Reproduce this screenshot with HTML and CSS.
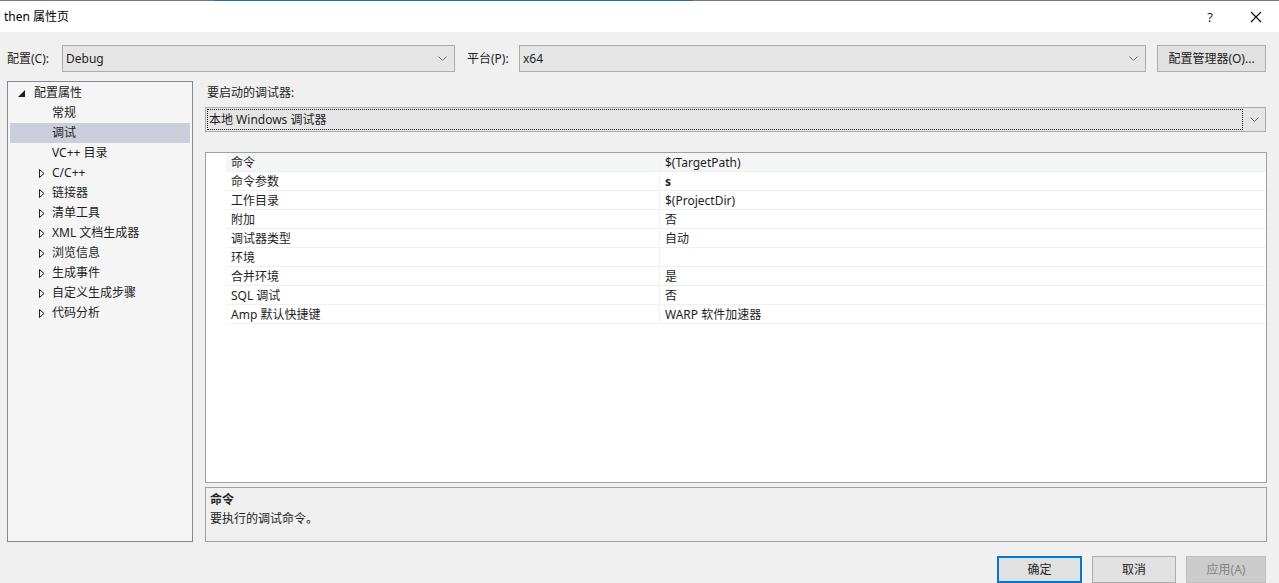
FILE: index.html
```html
<!DOCTYPE html>
<html lang="zh">
<head>
<meta charset="utf-8">
<title>then 属性页</title>
<link rel="stylesheet" href="styles.css">
</head>
<body>
<div class="accent"><span class="seg-a"></span><span class="seg-b"></span><span class="seg-c"></span></div>
<header class="titlebar">
  <div class="title">then 属性页</div>
  <div class="tb-buttons">
    <span class="tb-help">?</span>
    <svg class="tb-close" width="12" height="12" viewBox="0 0 12 12"><path d="M1 1 L11 11 M11 1 L1 11" stroke="#000" stroke-width="1.1" fill="none"/></svg>
  </div>
</header>
<main class="main">
  <div class="toprow">
    <label class="lbl lbl-config">配置(C):</label>
    <div class="combo combo-config"><span>Debug</span><svg class="chev" width="9" height="6" viewBox="0 0 9 6"><path d="M0.5 0.5 L4.5 4.5 L8.5 0.5" stroke="#707070" fill="none"/></svg></div>
    <label class="lbl lbl-platform">平台(P):</label>
    <div class="combo combo-platform"><span>x64</span><svg class="chev" width="9" height="6" viewBox="0 0 9 6"><path d="M0.5 0.5 L4.5 4.5 L8.5 0.5" stroke="#707070" fill="none"/></svg></div>
    <button class="btn btn-manager">配置管理器(O)...</button>
  </div>
  <div class="content">
    <nav class="tree">
      <div class="node root"><svg class="tri" width="7" height="7" viewBox="0 0 7 7"><path d="M7 0 L7 7 L0 7 Z" fill="#1e1e1e"/></svg><span>配置属性</span></div>
      <div class="node leaf"><span>常规</span></div>
      <div class="node leaf selected"><span>调试</span></div>
      <div class="node leaf"><span>VC++ 目录</span></div>
      <div class="node branch"><svg class="tri" width="6" height="9" viewBox="0 0 6 9"><path d="M0.5 0.5 L5 4.5 L0.5 8.5 Z" stroke="#1e1e1e" fill="none"/></svg><span>C/C++</span></div>
      <div class="node branch"><svg class="tri" width="6" height="9" viewBox="0 0 6 9"><path d="M0.5 0.5 L5 4.5 L0.5 8.5 Z" stroke="#1e1e1e" fill="none"/></svg><span>链接器</span></div>
      <div class="node branch"><svg class="tri" width="6" height="9" viewBox="0 0 6 9"><path d="M0.5 0.5 L5 4.5 L0.5 8.5 Z" stroke="#1e1e1e" fill="none"/></svg><span>清单工具</span></div>
      <div class="node branch"><svg class="tri" width="6" height="9" viewBox="0 0 6 9"><path d="M0.5 0.5 L5 4.5 L0.5 8.5 Z" stroke="#1e1e1e" fill="none"/></svg><span>XML 文档生成器</span></div>
      <div class="node branch"><svg class="tri" width="6" height="9" viewBox="0 0 6 9"><path d="M0.5 0.5 L5 4.5 L0.5 8.5 Z" stroke="#1e1e1e" fill="none"/></svg><span>浏览信息</span></div>
      <div class="node branch"><svg class="tri" width="6" height="9" viewBox="0 0 6 9"><path d="M0.5 0.5 L5 4.5 L0.5 8.5 Z" stroke="#1e1e1e" fill="none"/></svg><span>生成事件</span></div>
      <div class="node branch"><svg class="tri" width="6" height="9" viewBox="0 0 6 9"><path d="M0.5 0.5 L5 4.5 L0.5 8.5 Z" stroke="#1e1e1e" fill="none"/></svg><span>自定义生成步骤</span></div>
      <div class="node branch"><svg class="tri" width="6" height="9" viewBox="0 0 6 9"><path d="M0.5 0.5 L5 4.5 L0.5 8.5 Z" stroke="#1e1e1e" fill="none"/></svg><span>代码分析</span></div>
    </nav>
    <section class="right">
      <div class="dbg-label">要启动的调试器:</div>
      <div class="combo dbg-combo"><div class="focus">本地 Windows 调试器</div><svg class="chev" width="9" height="6" viewBox="0 0 9 6"><path d="M0.5 0.5 L4.5 4.5 L8.5 0.5" stroke="#707070" fill="none"/></svg></div>
      <div class="grid">
        <div class="row sel"><div class="gutter"></div><div class="name">命令</div><div class="value">$(TargetPath)</div></div>
        <div class="row"><div class="gutter"></div><div class="name">命令参数</div><div class="value bold">s</div></div>
        <div class="row"><div class="gutter"></div><div class="name">工作目录</div><div class="value">$(ProjectDir)</div></div>
        <div class="row"><div class="gutter"></div><div class="name">附加</div><div class="value">否</div></div>
        <div class="row"><div class="gutter"></div><div class="name">调试器类型</div><div class="value">自动</div></div>
        <div class="row"><div class="gutter"></div><div class="name">环境</div><div class="value"></div></div>
        <div class="row"><div class="gutter"></div><div class="name">合并环境</div><div class="value">是</div></div>
        <div class="row"><div class="gutter"></div><div class="name">SQL 调试</div><div class="value">否</div></div>
        <div class="row"><div class="gutter"></div><div class="name">Amp 默认快捷键</div><div class="value">WARP 软件加速器</div></div>
      </div>
      <div class="desc">
        <div class="desc-title">命令</div>
        <div class="desc-text">要执行的调试命令。</div>
      </div>
    </section>
  </div>
  <div class="footer">
    <button class="btn btn-ok">确定</button>
    <button class="btn btn-cancel">取消</button>
    <button class="btn btn-apply" disabled>应用(A)</button>
  </div>
</main>
</body>
</html>
```

FILE: styles.css
```css
* { box-sizing: border-box; }
html, body { margin: 0; padding: 0; }
body {
  width: 1279px;
  height: 583px;
  overflow: hidden;
  font-family: "Noto Sans", "Noto Sans CJK SC", sans-serif;
  font-size: 12px;
  color: #1e1e1e;
  background: #f0f0f0;
}
.accent { display: flex; height: 1px; }
.seg-a { width: 214px; background: #7a7a7a; }
.seg-b { width: 479px; background: #1b6fad; }
.seg-c { flex: 1; background: #7a7a7a; }

.titlebar {
  height: 31px;
  background: #ffffff;
  display: flex;
  align-items: center;
  justify-content: space-between;
  padding-left: 4px;
}
.title { font-size: 12px; line-height: 16px; color: #000; }
.tb-buttons { display: flex; align-items: center; }
.tb-help { width: 20px; text-align: center; font-size: 13px; margin-right: 30px; }
.tb-close { margin: 0 17px 0 0; }

.main {
  height: 551px;
  padding: 13px 13px 0 7px;
  display: flex;
  flex-direction: column;
}
.toprow { display: flex; align-items: center; height: 27px; }
.lbl { line-height: 16px; white-space: nowrap; }
.lbl-config { width: 55px; }
.lbl-platform { width: 52px; margin-left: 12px; }
.combo {
  height: 27px;
  background: #e5e5e5;
  border: 1px solid #acacac;
  display: flex;
  align-items: center;
  justify-content: space-between;
  padding: 0 7px 0 3px;
  line-height: 16px;
}
.combo-config { width: 393px; }
.combo-platform { flex: 1; margin-right: 11px; }
.chev { flex: none; }

.btn {
  font-family: inherit;
  font-size: 12px;
  color: #1e1e1e;
  background: #e1e1e1;
  border: 1px solid #adadad;
  padding: 0;
  line-height: 16px;
}
.btn-manager { width: 109px; height: 27px; }

.content { display: flex; margin-top: 9px; height: 461px; }
.tree {
  width: 186px;
  flex: none;
  background: #f5f5f5;
  border: 1px solid #828790;
  padding: 1px 2px 0 2px;
}
.node {
  height: 20px;
  display: flex;
  align-items: center;
  line-height: 16px;
  white-space: nowrap;
}
.node.root { padding-left: 8px; }
.node.root .tri { margin-right: 9px; margin-top: 1px; }
.node.leaf { padding-left: 42px; }
.node.branch { padding-left: 29px; }
.node.branch .tri { margin-right: 7px; }
.node.selected { background: #cccedb; }

.right { flex: 1; margin-left: 12px; display: flex; flex-direction: column; }
.dbg-label { line-height: 16px; padding: 0 0 0 2px; display: flex; align-items: center; margin-top: -2px; height: 28px; }
.dbg-combo { height: 25px; padding: 0 6px 0 1px; }
.focus {
  flex: 1;
  height: 21px;
  border: 1px dotted #1e1e1e;
  display: flex;
  align-items: center;
  padding-left: 1px;
  margin-right: 7px;
}

.grid {
  margin-top: 20px;
  height: 331px;
  background: #ffffff;
  border: 1px solid #a0a0a0;
  margin-right: -1px;
}
.row { display: flex; height: 19px; line-height: 16px; }
.gutter { width: 20px; flex: none; background: #ffffff; }
.name, .value {
  display: flex;
  align-items: flex-start;
  border-bottom: 1px solid #f0f0f0;
  padding-left: 5px;
  padding-top: 2px;
}
.name { width: 434px; flex: none; border-right: 1px solid #f3f3f3; }
.value { flex: 1; }
.row.sel .name, .row.sel .value { background: #f4f5f7; }
.bold { font-weight: 700; }

.desc {
  margin-top: 4px;
  height: 55px;
  background: #f0f0f0;
  border: 1px solid #a0a0a0;
  margin-right: -1px;
  padding: 2px 4px;
  line-height: 19px;
}
.desc-title { font-weight: 700; }

.footer {
  display: flex;
  justify-content: flex-end;
  gap: 10px;
  margin-top: 14px;
}
.btn-ok { width: 85px; height: 27px; border: 2px solid #0078d7; }
.btn-cancel { width: 84px; height: 27px; }
.btn-apply { width: 80px; height: 27px; background: #cccccc; border-color: #bfbfbf; color: #838383; }
```
